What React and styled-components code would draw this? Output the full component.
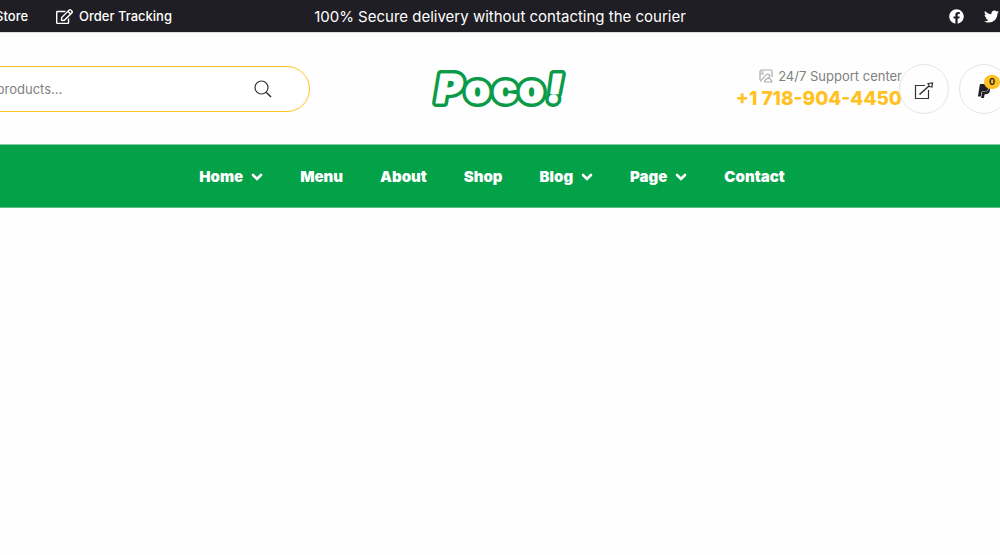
import styled, { createGlobalStyle } from "styled-components"
import { FaFacebook, FaTwitter, FaRegEdit, FaPaypal } from "react-icons/fa"

const menu = [
  { label: "Home", sub: true },
  { label: "Menu" },
  { label: "About" },
  { label: "Shop" },
  { label: "Blog", sub: true },
  { label: "Page", sub: true },
  { label: "Contact" },
];

export default function App() {
  return (
    <Page>
      <GlobalStyle />
      <TopBar>
        <TopRow>
          <TopLinks>
            <a href="#store">Find A Store</a>
            <a href="#tracking"><FaRegEdit size={17} />Order Tracking</a>
          </TopLinks>
          <Notice>100% Secure delivery without contacting the courier</Notice>
          <Social>
            <a href="#facebook" aria-label="Facebook"><FaFacebook /></a>
            <a href="#twitter" aria-label="Twitter"><FaTwitter /></a>
          </Social>
        </TopRow>
      </TopBar>

      <Header>
        <SearchForm onSubmit={(e) => e.preventDefault()}>
          <input type="search" aria-label="Search for products" placeholder="Search for products..." />
          <button aria-label="Search"><SearchIcon /></button>
        </SearchForm>
        <LogoLink href="#home" aria-label="Poco!"><Logo /></LogoLink>
        <Tools>
          <Support>
            <span><PictureIcon />24/7 Support center</span>
            <a href="tel:+17189044450">+1 718-904-4450</a>
          </Support>
          <RoundLink href="#account" aria-label="Account"><ShareIcon /></RoundLink>
          <RoundLink href="#cart" aria-label="Cart">
            <FaPaypal size={16} />
            <Badge>0</Badge>
          </RoundLink>
        </Tools>
      </Header>

      <Nav>
        {menu.map((item) => (
          <a key={item.label} href={"#" + item.label.toLowerCase()}>
            {item.label}
            {item.sub && <Chevron />}
          </a>
        ))}
      </Nav>
    </Page>
  )
}

function Logo() {
  return (
    <svg width="136" height="42" viewBox="0 0 136 42" strokeLinejoin="round">
      <defs>
        <text id="logo-word" y="35" fontFamily="Inter, sans-serif" fontSize="40" fontWeight="900">
          <tspan x="4" fontStyle="italic">P</tspan>
          <tspan x="33 61 87">oco</tspan>
          <tspan x="115" fontStyle="italic">!</tspan>
        </text>
      </defs>
      <use href="#logo-word" stroke="#0a9a48" strokeWidth="8" />
      <use href="#logo-word" fill="#fff" stroke="#fff" strokeWidth="1" />
    </svg>
  )
}

function Chevron() {
  return (
    <svg width="12" height="12" viewBox="0 0 12 12" fill="none" stroke="currentColor" strokeWidth="2.6" strokeLinecap="round">
      <path d="M2 5L6 9L10 5" />
    </svg>
  )
}

function SearchIcon() {
  return (
    <svg width="18" height="18" viewBox="0 0 18 18" fill="none" stroke="#333" strokeWidth="1.2">
      <circle cx="7.5" cy="7.5" r="6.5" />
      <path d="M12.2 12.2L17 17" strokeWidth="1.6" />
    </svg>
  )
}

function ShareIcon() {
  return (
    <svg width="20" height="18" viewBox="0 0 20 18" fill="none" stroke="#333" strokeWidth="1.2">
      <path d="M11 3.5H1.500V16.500H14.500V8" />
      <path d="M5.500 12.500L15 4" strokeWidth="1.6" />
      <path d="M14 1.500L18.500 1L18 5L15.500 4.500Z" />
    </svg>
  )
}

function PictureIcon() {
  return (
    <svg width="14" height="14" viewBox="0 0 14 14" fill="none" stroke="#aaa" strokeWidth="1.2">
      <path d="M1 11V2.500Q1 1 2.500 1H11.500Q13 1 13 2.500V8M1 5H5M2 3H5" />
      <path d="M1 12.500Q4 10 6 7Q8 4 10.500 6Q11.500 8 9 9Q6.500 10 5 13M6 13H13Q12.500 10 9 9" />
    </svg>
  )
}

const GlobalStyle = createGlobalStyle`
  * {
    box-sizing: border-box;
  }
  body {
    margin: 0;
    background-color: #fefefe;
    font-family: "Inter", sans-serif;
  }
  a {
    color: inherit;
    text-decoration: none;
  }
`
const Page = styled.div`
  overflow: hidden;
`
const TopBar = styled.div`
  background-color: #1f1e24;
  border-bottom: 1px solid #ddd;
  color: #fff;
`
const TopRow = styled.div`
  display: grid;
  grid-template-columns: 272px 1fr 272px;
  align-items: center;
  height: 32px;
  margin: 0 -100px;
`
const TopLinks = styled.div`
  display: flex;
  justify-content: flex-end;
  gap: 28px;
  font-size: 13px;
  font-weight: 500;
  white-space: nowrap;
  a {
    display: flex;
    align-items: center;
    gap: 6px;
  }
`
const Notice = styled.p`
  margin: 0;
  font-size: 15px;
  text-align: center;
  white-space: nowrap;
`
const Social = styled.div`
  display: flex;
  gap: 20px;
  padding-left: 121px;
  font-size: 15px;
  a {
    display: flex;
  }
`
const Header = styled.header`
  display: grid;
  grid-template-columns: 410px 1fr 410px;
  align-items: center;
  height: 111px;
  margin: 0 -100px;
`
const SearchForm = styled.form`
  display: flex;
  align-items: center;
  height: 46px;
  padding: 0 37px 0 28px;
  border: 1px solid #ffc222;
  border-radius: 23px;
  background-color: #fff;
  input {
    flex: 1;
    min-width: 0;
    padding: 0;
    border: none;
    outline: none;
    background: none;
    font-family: inherit;
    font-size: 13px;
  }
  input::placeholder {
    color: #808080;
  }
  button {
    display: flex;
    padding: 0;
    border: none;
    background: none;
  }
`
const LogoLink = styled.a`
  display: flex;
  justify-content: center;
`
const Tools = styled.div`
  display: flex;
  align-items: center;
  justify-content: flex-end;
  gap: 10px;
  padding-right: 91px;
`
const Support = styled.div`
  display: flex;
  flex-direction: column;
  align-items: flex-end;
  gap: 1px;
  margin-right: -13px;
  color: #808080;
  font-size: 13px;
  white-space: nowrap;
  span {
    display: flex;
    align-items: center;
    gap: 5px;
    line-height: 20px;
  }
  a {
    color: #ffc222;
    font-size: 19px;
    font-weight: 800;
    line-height: 24px;
  }
`
const RoundLink = styled.a`
  position: relative;
  display: flex;
  flex-shrink: 0;
  align-items: center;
  justify-content: center;
  width: 50px;
  height: 50px;
  padding-top: 4px;
  border: 1px solid #e5e5e5;
  border-radius: 50%;
  color: #1f1e24;
`
const Badge = styled.span`
  position: absolute;
  top: 10px;
  right: 8px;
  width: 16px;
  border-radius: 8px;
  background-color: #ffc222;
  font-size: 9px;
  font-weight: 700;
  line-height: 14px;
  text-align: center;
`
const Nav = styled.nav`
  display: flex;
  align-items: center;
  justify-content: center;
  gap: 37px;
  height: 64px;
  padding-right: 16px;
  border-top: 1px solid #80cda1;
  border-bottom: 1px solid #59c086;
  background-color: #03a249;
  color: #fff;
  font-size: 15px;
  font-weight: 900;
  a {
    display: flex;
    align-items: center;
    gap: 8px;
  }
`
